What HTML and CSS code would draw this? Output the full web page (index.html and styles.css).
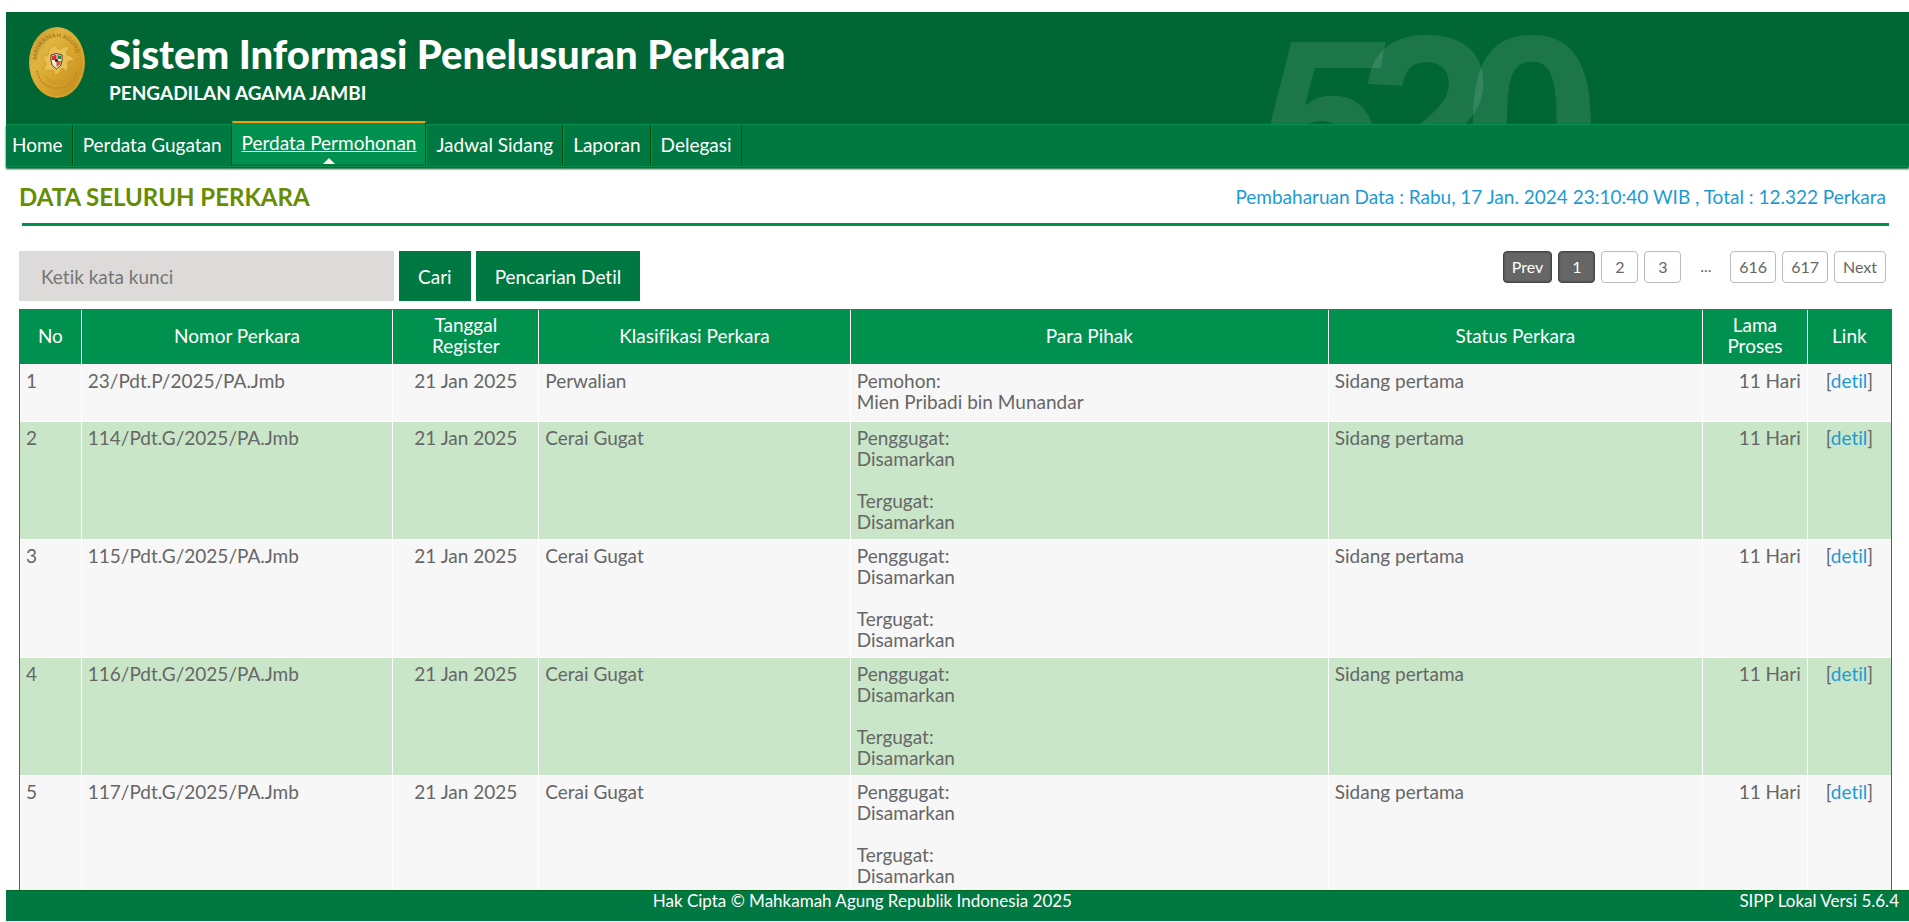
FILE: index.html
```
<!DOCTYPE html>
<html lang="id">
<head>
    <meta charset="UTF-8">
    <meta name="viewport" content="width=device-width, initial-scale=1.0">
    <title>Sistem Informasi Penelusuran Perkara</title>

    <link rel="stylesheet" href="styles.css">
</head>
<body>
<header class="header">
    <svg class="logo" viewBox="0 0 56 71" aria-hidden="true">
        <defs>
            <linearGradient id="gold" x1="0" y1="0" x2="1" y2="1">
                <stop offset="0" stop-color="#b98a20"/>
                <stop offset="0.3" stop-color="#e0b440"/>
                <stop offset="0.55" stop-color="#d9a52c"/>
                <stop offset="1" stop-color="#bd8a1c"/>
            </linearGradient>
            <path id="arc-top" d="M8 33 C9 3 47 3 48 33"/>
        </defs>
        <ellipse cx="28" cy="35.5" rx="28" ry="35.5" fill="url(#gold)"/>
        <ellipse cx="28" cy="35.5" rx="26.5" ry="34" fill="none" stroke="#dcae3c" stroke-width="0.8"/>
        <text class="logo-text"><textPath href="#arc-top">MAHKAMAH AGUNG</textPath></text>
        <path d="M26 18 Q28 23 32 22 Q36 18 41 21 Q36 24 38 28 Q44 29 45 34 Q40 32 38 36 Q40 42 36 45 Q36 40 32 42 Q30 48 24 48 Q28 44 23 43 Q17 45 13 41 Q18 41 17 36 Q13 32 14 27 Q17 31 19 28 Q19 22 26 18 Z" fill="#e9c253" stroke="#c4922a" stroke-width="0.6"/>
        <path d="M22 28 Q27.5 25 33 28 V34 Q33 39 27.5 42 Q22 39 22 34 Z" fill="#f5e9d8" stroke="#3a2b18" stroke-width="0.9"/>
        <path d="M23 29 L27.5 27.5 V33 H23 Z" fill="#d8302c"/>
        <path d="M27.5 34 H32 L31 37.5 L27.5 40 Z" fill="#e0532c"/>
        <path d="M28.5 28 L32 29 V32 H28.5 Z" fill="#2f7d4c"/>
        <circle cx="27.5" cy="33.5" r="1.6" fill="#222"/>
        <path d="M15 49 Q28 60 41 49 M18 53 Q28 61 38 53" fill="none" stroke="#c4922a" stroke-width="0.8"/>
        <path d="M8 44 C13 67 43 67 48 44" fill="none" stroke="#bb8a26" stroke-width="2.2" stroke-dasharray="1.6 1.4"/>
    </svg>
    <div class="title">
        <h1>Sistem Informasi Penelusuran Perkara</h1>
        <h2>PENGADILAN AGAMA JAMBI</h2>
    </div>
    <svg class="watermark" viewBox="0 0 340 112" aria-hidden="true">
        <text class="slant" x="-12" y="188">5</text>
        <text x="90" y="197">2</text>
        <text x="195" y="197">0</text>
    </svg>
</header>

<nav class="menu">
    <a href="#">Home</a>
    <a href="#">Perdata Gugatan</a>
    <a href="#" class="active">Perdata Permohonan</a>
    <a href="#">Jadwal Sidang</a>
    <a href="#">Laporan</a>
    <a href="#">Delegasi</a>
</nav>

<main class="content">
    <div class="page-title">
        <h3>DATA SELURUH PERKARA</h3>
        <span class="info">Pembaharuan Data : Rabu, 17 Jan. 2024 23:10:40 WIB , Total : 12.322 Perkara</span>
    </div>
    <hr>

    <div class="toolbar">
        <form class="search">
            <input type="text" placeholder="Ketik kata kunci" aria-label="Ketik kata kunci">
            <button type="submit">Cari</button>
            <button type="button">Pencarian Detil</button>
        </form>
        <div class="paging">
            <a href="#" class="current">Prev</a>
            <a href="#" class="current">1</a>
            <a href="#">2</a>
            <a href="#">3</a>
            <span>...</span>
            <a href="#">616</a>
            <a href="#">617</a>
            <a href="#">Next</a>
        </div>
    </div>

    <table class="data">
        <colgroup>
            <col class="col-no">
            <col class="col-nomor">
            <col class="col-tanggal">
            <col class="col-klasifikasi">
            <col class="col-pihak">
            <col class="col-status">
            <col class="col-lama">
            <col class="col-link">
        </colgroup>
        <thead>
            <tr>
                <th>No</th>
                <th>Nomor Perkara</th>
                <th>Tanggal<br>Register</th>
                <th>Klasifikasi Perkara</th>
                <th>Para Pihak</th>
                <th>Status Perkara</th>
                <th>Lama<br>Proses</th>
                <th>Link</th>
            </tr>
        </thead>
        <tbody>
            <tr>
                <td>1</td>
                <td>23/Pdt.P/2025/PA.Jmb</td>
                <td class="center">21 Jan 2025</td>
                <td>Perwalian</td>
                <td>Pemohon:<br>Mien Pribadi bin Munandar</td>
                <td>Sidang pertama</td>
                <td class="right">11 Hari</td>
                <td class="center">[<a href="#">detil</a>]</td>
            </tr>
            <tr>
                <td>2</td>
                <td>114/Pdt.G/2025/PA.Jmb</td>
                <td class="center">21 Jan 2025</td>
                <td>Cerai Gugat</td>
                <td>Penggugat:<br>Disamarkan<br><br>Tergugat:<br>Disamarkan</td>
                <td>Sidang pertama</td>
                <td class="right">11 Hari</td>
                <td class="center">[<a href="#">detil</a>]</td>
            </tr>
            <tr>
                <td>3</td>
                <td>115/Pdt.G/2025/PA.Jmb</td>
                <td class="center">21 Jan 2025</td>
                <td>Cerai Gugat</td>
                <td>Penggugat:<br>Disamarkan<br><br>Tergugat:<br>Disamarkan</td>
                <td>Sidang pertama</td>
                <td class="right">11 Hari</td>
                <td class="center">[<a href="#">detil</a>]</td>
            </tr>
            <tr>
                <td>4</td>
                <td>116/Pdt.G/2025/PA.Jmb</td>
                <td class="center">21 Jan 2025</td>
                <td>Cerai Gugat</td>
                <td>Penggugat:<br>Disamarkan<br><br>Tergugat:<br>Disamarkan</td>
                <td>Sidang pertama</td>
                <td class="right">11 Hari</td>
                <td class="center">[<a href="#">detil</a>]</td>
            </tr>
            <tr>
                <td>5</td>
                <td>117/Pdt.G/2025/PA.Jmb</td>
                <td class="center">21 Jan 2025</td>
                <td>Cerai Gugat</td>
                <td>Penggugat:<br>Disamarkan<br><br>Tergugat:<br>Disamarkan</td>
                <td>Sidang pertama</td>
                <td class="right">11 Hari</td>
                <td class="center">[<a href="#">detil</a>]</td>
            </tr>
        </tbody>
    </table>
</main>

<footer class="footer">
    <span class="copyright">Hak Cipta © Mahkamah Agung Republik Indonesia 2025</span>
    <span class="version">SIPP Lokal Versi 5.6.4</span>
</footer>
</body>
</html>
```
FILE: styles.css
```
* {
    box-sizing: border-box;
}

body {
    display: flex;
    flex-direction: column;
    height: 100vh;
    margin: 0;
    padding: 12px 0 1px 6px;
    background-color: #fff;
    color: #666;
    font-family: "Century Gothic", Lato, sans-serif;
    font-size: 19px;
    font-variant-ligatures: none;
    line-height: 21px;
}

h1, h2, h3 {
    margin: 0;
}

a {
    color: #1c9ad6;
    text-decoration: none;
}

/* header */
.header {
    display: flex;
    flex-shrink: 0;
    height: 112px;
    padding-left: 23px;
    background-color: #006633;
    color: #fff;
    overflow: hidden;
}
.logo {
    width: 56px;
    height: 71px;
    margin: 15px 24px 0 0;
}
.logo-text {
    fill: #a87818;
    font-size: 6px;
    font-weight: bold;
}
.title {
    padding-top: 18px;
}
.title h1 {
    font-size: 40px;
    font-weight: 900;
    line-height: 48px;
}
.title h2 {
    margin-top: 3px;
    font-size: 19px;
    line-height: 24px;
}
.watermark {
    width: 340px;
    height: 112px;
    margin: 0 16% 0 auto;
    fill: #fff;
    fill-opacity: 0.11;
    font-family: "Liberation Sans", Arial, sans-serif;
    font-size: 248px;
    font-weight: bold;
}
.watermark .slant {
    font-size: 228px;
    font-style: italic;
}

/* menu */
.menu {
    display: flex;
    flex-shrink: 0;
    height: 43px;
    border-top: 1px solid #008f4c;
    border-bottom: 1px solid #008f4c;
    background-color: #007841;
    box-shadow: 0 2px 2px #00522a;
    z-index: 1;
}
.menu a {
    padding: 0 9px;
    border-left: 1px solid #008f4c;
    border-right: 1px solid #005200;
    color: #fff;
    line-height: 39px;
}
.menu a:first-child {
    padding-left: 6px;
    border-left: none;
}
.menu a.active {
    position: relative;
    height: 43px;
    margin-top: -4px;
    border-top: 2px solid #ff9900;
    background-color: #00914e;
    text-decoration: underline;
}
.menu a.active::after {
    content: "";
    position: absolute;
    bottom: 0;
    left: 50%;
    margin-left: -6px;
    border: 6px solid transparent;
    border-top: none;
    border-bottom-color: #fff0ee;
}

/* content */
.content {
    flex: 1;
    min-height: 0;
    padding: 3px 17px 0 13px;
    overflow: hidden;
}
.page-title {
    display: flex;
    align-items: center;
    justify-content: space-between;
    height: 53px;
    padding-right: 6px;
}
.page-title h3 {
    color: #668c00;
    font-size: 24px;
}
.info {
    color: #1c9ad6;
}
hr {
    height: 3px;
    margin: 0 3px 25px;
    border: none;
    background-color: #00914e;
}
.toolbar {
    display: flex;
    justify-content: space-between;
    margin-bottom: 8px;
}
.search {
    display: flex;
    gap: 5px;
}
.search input {
    width: 375px;
    height: 50px;
    padding: 0 22px;
    border: none;
    background-color: #dddbda;
    color: #666;
    font: inherit;
}
.search button {
    height: 50px;
    padding: 0 19px;
    border: none;
    background-color: #007841;
    color: #fff;
    font: inherit;
    cursor: pointer;
}
.paging {
    display: flex;
    gap: 6px;
    padding-right: 6px;
    font-size: 16px;
}
.paging a,
.paging span {
    min-width: 37px;
    height: 32px;
    padding: 0 8px;
    line-height: 30px;
    text-align: center;
}
.paging a {
    border: 1px solid #bbb;
    border-radius: 4px;
    color: #666;
}
.paging a.current {
    border-color: #444;
    background-color: #666;
    color: #fff;
    box-shadow: inset 0 0 2px #333;
}

/* table */
.data {
    width: 100%;
    border: 1px solid #00914e;
    border-spacing: 0;
    table-layout: fixed;
}
.data th,
.data td {
    padding: 5px 6px 7px;
    border-left: 1px solid #fff;
    border-bottom: 1px solid #fff;
}
.data th:first-child,
.data td:first-child {
    border-left: none;
}
.data th {
    padding: 4px 6px 8px;
    background-color: #00914e;
    color: #fff;
    font-weight: normal;
}
.data td {
    height: 57px;
    background-color: #f7f7f7;
    vertical-align: top;
}
.data tr:nth-child(even) td {
    background-color: #c9e6c8;
}
.data .center {
    text-align: center;
}
.data .right {
    text-align: right;
}
.col-no {
    width: 3.25%;
}
.col-nomor {
    width: 16.65%;
}
.col-tanggal {
    width: 7.8%;
}
.col-klasifikasi {
    width: 16.65%;
}
.col-pihak {
    width: 25.55%;
}
.col-status {
    width: 20%;
}
.col-lama {
    width: 5.6%;
}
.col-link {
    width: 4.5%;
}

/* footer */
.footer {
    display: flex;
    flex-shrink: 0;
    height: 31px;
    border-top: 1px solid #006b1e;
    background-color: #007841;
    color: #fff;
    font-size: 17px;
    line-height: 19px;
    text-align: center;
}
.copyright {
    flex: 1;
}
.version {
    width: 10%;
    padding-right: 10px;
    text-align: right;
    white-space: nowrap;
}
```
